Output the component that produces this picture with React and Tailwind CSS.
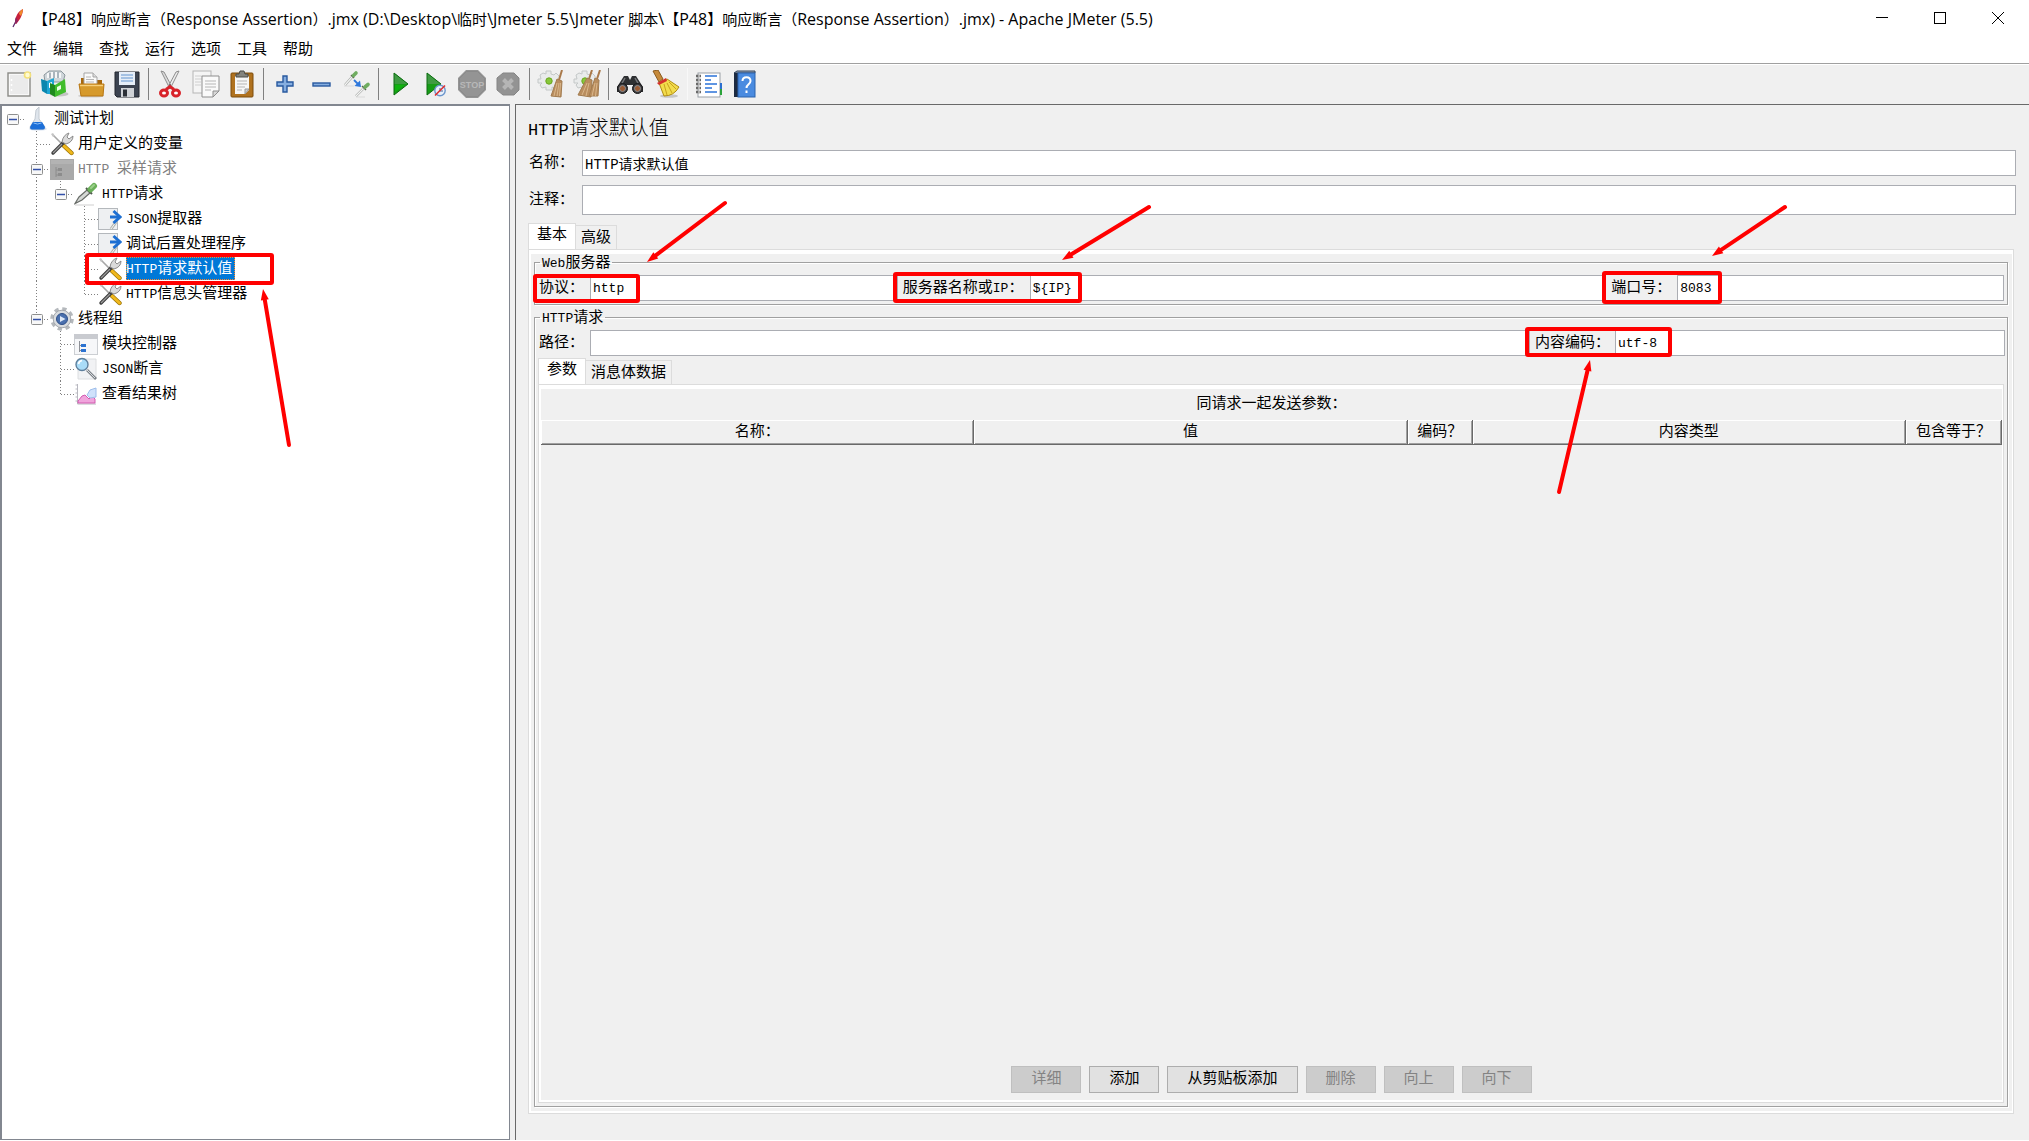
import React from "react";
import clsx from "clsx";

/* ---------- text ---------- */

// Latin runs get their own size next to the CJK glyphs
const Mixed = ({ text, latin = "text-[13px]" }) =>
  text.split(/([\x20-\x7e]+)/).map((part, i) =>
    i % 2 ? (
      <span key={i} className={clsx("font-normal whitespace-pre", latin)}>
        {part}
      </span>
    ) : (
      part
    )
  );

/* ---------- toolbar icons (28 x 28) ---------- */

const Svg = ({ size = 28, children }) => (
  <svg
    width={size}
    height={size}
    viewBox={`0 0 ${size} ${size}`}
    fill="none"
    className="shrink-0"
    aria-hidden="true"
  >
    {children}
  </svg>
);

const Feather = () => (
  <svg width="14" height="20" viewBox="0 0 14 20" fill="none" aria-hidden="true">
    <path d="M2 19 L5 13" stroke="#5b2a6b" strokeWidth="1.2" />
    <path d="M4 15 C4 9 7 3 12 1 C12 7 8 13 5 16 Z" fill="#c8203c" />
    <path d="M8 6 C8 4 10 2 12 1 C12 3 11 6 10 8 Z" fill="#f08a2c" />
    <path d="M4 15 C4 13 4 11 5 9 L7 13 L5 16 Z" fill="#8d2460" />
  </svg>
);

const NewIcon = () => (
  <Svg>
    <rect x="3" y="3" width="22" height="23" fill="#f8f8f8" stroke="#8a8a86" strokeWidth="1.4" />
    <rect x="5" y="5" width="18" height="19" fill="#ebebeb" />
    <path d="M6.5 9 V22" stroke="#fff" strokeWidth="1.5" strokeDasharray="2 3" />
    <circle cx="22.5" cy="5" r="3" fill="#fffbd0" stroke="#f3e07a" strokeWidth="1.6" />
  </Svg>
);

const TemplatesIcon = () => (
  <Svg>
    <ellipse cx="18" cy="24" rx="9.5" ry="2.5" fill="#c4c4c4" />
    <path d="M3 5 L8 1 L20 1 L24 5 L22 12 L4 12 Z" fill="#cfd6da" stroke="#8c979d" />
    <path d="M7 8 V3 M11 8 V2 M15 8 V2 M19 8 V3" stroke="#fff" strokeWidth="1.6" />
    <path d="M9 8 V3 M13 8 V2 M17 8 V2" stroke="#8794a0" />
    <path d="M0 9 L6 11 V24 L1 21 Z" fill="#0a86ae" />
    <path d="M6 11 L13 8 V24 L6 24 Z" fill="#1fa6d4" />
    <path d="M8 13 L11 12 V17 L8 18 Z" fill="#fff" />
    <path d="M9 13 L14 15 V27 L9 24 Z" fill="#1f8a1d" />
    <path d="M14 15 L24 9 L25 22 L14 27 Z" fill="#41bd2c" />
    <path d="M16 17 L20 15 V19 L16 21 Z" fill="#e9ffe2" />
  </Svg>
);

const OpenIcon = () => (
  <Svg>
    <ellipse cx="14" cy="26" rx="13" ry="1.6" fill="#cfcfcf" />
    <path d="M4 8 H9 L11 10 H25 V24 H4 Z" fill="#a8680d" />
    <path d="M7 3 H16 L20 7 V15 H7 Z" fill="#fafafa" stroke="#a5a5a5" />
    <path d="M16 3 V7 H20" fill="#ddd" stroke="#a5a5a5" />
    <path d="M9 7 H14 M9 9.5 H17 M9 12 H17" stroke="#b7b7b7" />
    <path d="M2 14 H27 L26 26 H4 Z" fill="#d69a2c" stroke="#b87713" />
    <path d="M3 15.5 H26" stroke="#f6d07c" strokeWidth="1.4" />
  </Svg>
);

const SaveIcon = () => (
  <Svg>
    <path d="M2 2 H26 V27 H4 L2 25 Z" fill="#3c4350" stroke="#23272f" />
    <rect x="6" y="2" width="16" height="13" fill="#e6eef8" />
    <path d="M8 5 H20 M8 8 H20 M8 11 H20" stroke="#8fb2dc" strokeWidth="1.4" />
    <rect x="8" y="18" width="13" height="9" fill="#cfd2d6" />
    <rect x="10" y="19.5" width="4" height="7" fill="#2b2f36" />
  </Svg>
);

const CutIcon = () => (
  <Svg>
    <path d="M5 1 L8 2 L16 17 L14 19 Z" fill="#dcdcdc" stroke="#8d8d8d" />
    <path d="M23 1 L20 2 L12 17 L14 19 Z" fill="#efefef" stroke="#8d8d8d" />
    <circle cx="14" cy="15" r="1.2" fill="#777" />
    <ellipse cx="8" cy="23" rx="3.5" ry="3" fill="#fff" stroke="#d8232a" strokeWidth="3" />
    <ellipse cx="20" cy="23" rx="3.5" ry="3" fill="#fff" stroke="#d8232a" strokeWidth="3" />
    <path d="M10 19.5 L14 16.5 L18 19.5" stroke="#d8232a" strokeWidth="3" />
  </Svg>
);

const CopyIcon = () => (
  <Svg>
    <rect x="1" y="1" width="18" height="22" fill="#f5f5f5" stroke="#b5b5b5" />
    <path d="M3 6 H10 M3 9 H10 M3 12 H9 M3 15 H9" stroke="#cfcfcf" />
    <path d="M10 6 H27 V21 L21 27 H10 Z" fill="#fafafa" stroke="#8e8e8e" />
    <path d="M13 11 H24 M13 14 H24 M13 17 H24 M13 20 H19" stroke="#b5b5b5" strokeWidth="1.2" />
    <path d="M27 21 H21 V27 Z" fill="#d8d8d8" stroke="#8e8e8e" />
  </Svg>
);

const PasteIcon = () => (
  <Svg>
    <rect x="3" y="3" width="22" height="24" rx="1" fill="#b0721f" stroke="#7d4c0c" />
    <path d="M7 6 H21 V20 L17 24 H7 Z" fill="#f6f6f6" />
    <path d="M9 11 H19 M9 14 H19 M9 17 H17 M9 20 H14" stroke="#b5b5b5" />
    <path d="M21 19 H17 V24 Z" fill="#cfcfcf" stroke="#999" />
    <path d="M8 7 V4 H11 L12 1 H16 L17 4 H20 V7 Z" fill="#83837d" stroke="#4d4d49" />
  </Svg>
);

const PlusIcon = () => (
  <Svg>
    <path d="M12 6 H16 V12 H22 V16 H16 V22 H12 V16 H6 V12 H12 Z" fill="#86aee0" stroke="#28599f" strokeWidth="1.4" />
  </Svg>
);

const MinusIcon = () => (
  <Svg>
    <rect x="6" y="13" width="17" height="3" fill="#86aee0" stroke="#28599f" strokeWidth="1.4" />
  </Svg>
);

const ToggleIcon = () => (
  <Svg>
    <path d="M1 16 H11 M13 27 H22" stroke="#dadada" />
    <path d="M2 15 L9 7" stroke="#9da19d" strokeWidth="2.4" />
    <path d="M2 15 L9 7" stroke="#f4f4f4" strokeWidth="1.2" />
    <path d="M8 5 L11 8" stroke="#55604f" strokeWidth="1.4" />
    <path d="M10.5 5.5 L13 3" stroke="#6fac60" strokeWidth="3.6" strokeLinecap="round" />
    <path d="M13 26 L20 19" stroke="#9da19d" strokeWidth="2.4" />
    <path d="M13 26 L20 19" stroke="#f4f4f4" strokeWidth="1.2" />
    <path d="M19 16 L23 20" stroke="#55604f" strokeWidth="1.4" />
    <path d="M22 17 L25 14.5" stroke="#6fac60" strokeWidth="3.6" strokeLinecap="round" />
    <path d="M11 10 L15 14" stroke="#2f78dc" strokeWidth="1.8" />
    <path d="M18 17 L11.5 16 L17 10.5 Z" fill="#2f78dc" />
  </Svg>
);

const StartIcon = () => (
  <Svg>
    <path d="M8 3 L22 14 L8 25 Z" fill="#179c17" />
    <path d="M8 3 L22 14 H8 Z" fill="#3f9b43" />
    <path d="M9 22 V15 H19 Z" fill="#0eb40e" />
    <path d="M8 3 L22 14 L8 25 Z" stroke="#0c6d10" />
  </Svg>
);

const StartNoPauseIcon = () => (
  <Svg>
    <path d="M5 3 L19 14 L5 25 Z" fill="#179c17" />
    <path d="M5 3 L19 14 H5 Z" fill="#3f9b43" />
    <path d="M5 3 L19 14 L5 25 Z" stroke="#0c6d10" />
    <circle cx="18" cy="20.5" r="5.2" fill="#e8f0fa" stroke="#6c96cc" strokeWidth="1.4" />
    <path d="M18 18 V21 H21" stroke="#47679a" />
    <path d="M13 25.5 L23 15.5" stroke="#e03030" strokeWidth="1.6" />
  </Svg>
);

const StopIcon = () => (
  <Svg>
    <path d="M8 0 H20 L28 8 V20 L20 28 H8 L0 20 V8 Z" fill="#949494" />
    <path d="M8.5 1.5 H19.5 L26.5 8.5 V19.5 L19.5 26.5 H8.5 L1.5 19.5 V8.5 Z" stroke="#8a8a8a" />
    <text x="14" y="18" textAnchor="middle" fontSize="9" fontWeight="bold" fontFamily="Liberation Sans, sans-serif" fill="#b8b8b8">
      STOP
    </text>
  </Svg>
);

const ShutdownIcon = () => (
  <Svg>
    <path d="M9 3 H20 L25 8 V20 L20 25 H9 L3 20 V8 Z" fill="#939393" stroke="#858585" />
    <path d="M9.5 9.5 L18.5 18.5 M18.5 9.5 L9.5 18.5" stroke="#b5b5b5" strokeWidth="4" />
  </Svg>
);

const GearShape = () => (
  <>
    <path
      d="M9 1 H14 V4 L17 5 L19 3 L22 6 V16 L18 18 L15 17 V20 H9 V17 L5 18 L3 15 L5 13 H1 V9 H4 L3 5 L6 3 L9 4 Z"
      fill="#e9ebeb"
      stroke="#c4c8c8"
    />
    <circle cx="12" cy="11" r="3.2" fill="#86c83a" stroke="#6ba51f" />
  </>
);

const ClearIcon = () => (
  <Svg>
    <GearShape />
    <path d="M25 0 L22 10" stroke="#a9794a" strokeWidth="2" />
    <path d="M20 9 L25 11 L24 27 L14 26 Z" fill="#b98d5e" stroke="#a27c50" />
    <path d="M20 13 L17 26 M22 13 L20 26 M23.5 13 L22.5 26" stroke="#dab78b" />
  </Svg>
);

const ClearAllIcon = () => (
  <Svg>
    <GearShape />
    <path d="M19 0 L16 9 M27 0 L24 9" stroke="#a9794a" strokeWidth="2" />
    <path d="M14 8 L19 10 L18 27 L5 25 Z" fill="#b98d5e" stroke="#a27c50" />
    <path d="M22 8 L26 10 L25 26 L16 26 Z" fill="#b98d5e" stroke="#a27c50" />
    <path d="M14 13 L9 25 M16 13 L13 26 M22 13 L19 26 M24 13 L22.5 26" stroke="#dab78b" />
  </Svg>
);

const SearchIcon = () => (
  <Svg>
    <path d="M8 6 H12 L14 10 L16 6 H20 L27 17 V22 H17 V15 H11 V22 H1 V17 Z" fill="#2f3032" />
    <path d="M9 8 L5 15 M19 8 L23 15" stroke="#77797c" strokeWidth="1.5" />
    <circle cx="6.5" cy="18.5" r="5" fill="#3a3a3c" stroke="#18181a" />
    <circle cx="21.5" cy="18.5" r="5" fill="#3a3a3c" stroke="#18181a" />
    <circle cx="6.5" cy="18.5" r="3" fill="#9a5a32" stroke="#8b8c90" />
    <circle cx="21.5" cy="18.5" r="3" fill="#9a5a32" stroke="#8b8c90" />
  </Svg>
);

const BroomIcon = () => (
  <Svg>
    <ellipse cx="17" cy="26" rx="9" ry="1.8" fill="#c6c6c6" />
    <path d="M1 1 L6 0 L11 9 L7 12 Z" fill="#c68a3a" stroke="#8b5a1e" />
    <path d="M7 13 L15 9 L27 17 Q22 26 12 26 Z" fill="#f2dc4c" stroke="#b08c10" />
    <path d="M12 14 L15 25 M15 13 L20 23 M17 12 L24 19" stroke="#c7a21c" />
    <path d="M5 13 L14 8 L15 11 L7 15 Z" fill="#d3312b" />
  </Svg>
);

const FunctionIcon = () => (
  <Svg>
    <rect x="3" y="3" width="22" height="24" fill="#fff" stroke="#9aa0a6" />
    <rect x="25" y="13" width="2" height="6" fill="#2b6fd0" />
    <rect x="25" y="19" width="2" height="6" fill="#2aa33a" />
    <path d="M10 6 H22 M10 10 H16 M10 14 H22 M10 18 H17 M10 22 H22" stroke="#2b73d9" strokeWidth="1.6" />
    <path d="M1 6 H6 M1 10 H6 M1 14 H6 M1 18 H6 M1 22 H6" stroke="#6a6a6a" strokeWidth="2.4" />
    <path d="M3 6 H5 M3 10 H5 M3 14 H5 M3 18 H5 M3 22 H5" stroke="#eee" />
  </Svg>
);

const HelpIcon = () => (
  <Svg>
    <path d="M3 3 L6 1 H24 V3 Z" fill="#9aa4b2" stroke="#33455f" />
    <rect x="3" y="3" width="5" height="24" fill="#1d2b42" />
    <rect x="7" y="3" width="17" height="24" fill="#4a8be0" stroke="#2a63ad" />
    <path d="M11.5 11 C11.5 6 19.5 6 19.5 11 C19.5 14.5 15.5 14 15.5 18" stroke="#fff" strokeWidth="2" />
    <rect x="14.5" y="20.5" width="2" height="2.5" fill="#fff" />
  </Svg>
);

/* ---------- tree icons (24 x 24) ---------- */

const FlaskIcon = () => (
  <Svg size={24}>
    <ellipse cx="12" cy="22" rx="9" ry="1.6" fill="#d8e2f0" />
    <path d="M10 3 L13 0 V12 L19 20 Q19 22.5 17 22.5 H6 Q4 22.5 4 20 L9 12 Z" fill="#dfe5ec" stroke="#c3cad2" />
    <path d="M7 15 H16 L19 20 Q19 22.5 17 22.5 H6 Q4 22.5 4 20 Z" fill="#1c6fd8" />
    <path d="M7.5 16 Q11.5 18 15.5 16" stroke="#8fc0f5" />
  </Svg>
);

const ToolsIcon = () => (
  <Svg size={24}>
    <path d="M3 3 L13 13" stroke="#a6a6a6" strokeWidth="1.6" />
    <path d="M1 2 L3 1 L5 4 L3 5 Z" fill="#c4c4c4" />
    <path d="M14 14 L21.5 21" stroke="#9a7408" strokeWidth="4.4" strokeLinecap="round" />
    <path d="M14 14 L21.5 21" stroke="#f0b81c" strokeWidth="3" strokeLinecap="round" />
    <path d="M3 21 L14 10" stroke="#3e3e3e" strokeWidth="3.4" strokeLinecap="round" />
    <path d="M3 21 L12 12" stroke="#9b9b9b" strokeWidth="1.2" />
    <path d="M12 10 Q13 3 19 1 L17 5 L19 7 L23 4 Q23 10 16 12 Z" fill="#dadada" stroke="#8a8a8a" />
  </Svg>
);

const DisabledControllerIcon = () => (
  <Svg size={24}>
    <rect x="0" y="2" width="24" height="21" fill="#a9a9a9" />
    <rect x="1" y="3" width="22" height="4" fill="#b3b3b3" />
    <path d="M6 10 V20 M6 13 H9 M6 18 H9" stroke="#8c8c8c" />
    <rect x="8" y="11" width="4" height="3" fill="#8c8c8c" />
    <rect x="8" y="16" width="4" height="3" fill="#8c8c8c" />
  </Svg>
);

const SamplerIcon = () => (
  <Svg size={24}>
    <path d="M1 23 H20" stroke="#cfcfcf" />
    <path d="M1 21.5 L5 15 L13 8 L16 11 L8 18 Z" fill="#d5d8d5" stroke="#686c68" strokeWidth="1.2" />
    <path d="M12 6 L18 12" stroke="#4f5a4c" strokeWidth="2" />
    <path d="M16.5 7.5 L20 4" stroke="#6bb05a" strokeWidth="6" strokeLinecap="round" />
    <path d="M17 6 L20 3" stroke="#9ad089" strokeWidth="2" strokeLinecap="round" />
  </Svg>
);

const PostProcessorIcon = () => (
  <Svg size={24}>
    <rect x="0.5" y="1.5" width="19" height="21" fill="#eef0f2" stroke="#b4b8bc" />
    <path d="M18 15 L13 22" stroke="#b0b4b0" strokeWidth="3" />
    <path d="M18 15 L13 22" stroke="#f4f4f4" />
    <path d="M12 10 H21" stroke="#1d6fd2" strokeWidth="3" />
    <path d="M15.5 4 L22 10 L15.5 16" stroke="#1d6fd2" strokeWidth="3" />
  </Svg>
);

const ThreadGroupIcon = () => (
  <Svg size={24}>
    <circle cx="12" cy="12" r="10" stroke="#b4b8bc" strokeWidth="3.6" strokeDasharray="4.2 3.65" />
    <circle cx="12" cy="12" r="8.8" fill="#d9dcdf" stroke="#a4a8ad" />
    <circle cx="12" cy="12" r="5.5" fill="#4a70ae" stroke="#2e4f88" />
    <path d="M10 9 L15.5 12 L10 15 Z" fill="#dfe9f7" />
  </Svg>
);

const ControllerIcon = () => (
  <Svg size={24}>
    <rect x="0.5" y="2.5" width="23" height="20" fill="#f6f7f9" stroke="#cccfd3" />
    <rect x="0" y="2" width="24" height="5" fill="#c9cbd0" />
    <path d="M5.5 9 V20 M5.5 13.5 H8 M5.5 18.5 H8" stroke="#8d9096" />
    <rect x="7" y="12" width="5" height="3" fill="#2c72d0" />
    <rect x="7" y="17" width="5" height="3" fill="#2c72d0" />
  </Svg>
);

const AssertionIcon = () => (
  <Svg size={24}>
    <path d="M4 2 H22 V22 H4 Z" fill="#f1f2f4" stroke="#dcdee0" />
    <path d="M13 13 L22 22" stroke="#7c8288" strokeWidth="2.6" />
    <path d="M13 13 L21 21" stroke="#d9dcdf" />
    <circle cx="8" cy="7.5" r="6" fill="#a9dcf8" stroke="#5e7f9c" strokeWidth="1.4" />
    <path d="M4.5 7 Q5 4 8 3.5" stroke="#fff" strokeWidth="1.6" />
  </Svg>
);

const ListenerIcon = () => (
  <Svg size={24}>
    <path d="M3.5 2 V22 H22" stroke="#b8b8c0" />
    <path d="M1.5 3 H3 M1.5 7 H3 M1.5 11 H3 M1.5 15 H3 M1.5 19 H3" stroke="#b8b8c0" />
    <path d="M4 19 L8 14 L11 13 L15 17 L18 14 L21 17 V21 H4 Z" fill="#f0a4dc" stroke="#d25ab0" />
    <path d="M13 13 L16 8 L22 6 V15 L16 16 Z" fill="#cfe2fb" stroke="#9dbdea" />
  </Svg>
);

/* ---------- window chrome ---------- */

const MENUS = ["文件", "编辑", "查找", "运行", "选项", "工具", "帮助"];

const TITLE =
  "【P48】响应断言（Response Assertion）.jmx (D:\\Desktop\\临时\\Jmeter 5.5\\Jmeter 脚本\\【P48】响应断言（Response Assertion）.jmx) - Apache JMeter (5.5)";

// a string stands for a separator and holds its colour
const TOOLS = [
  ["新建", NewIcon],
  ["模板", TemplatesIcon],
  ["打开", OpenIcon],
  ["保存", SaveIcon],
  "bg-[#808080]",
  ["剪切", CutIcon],
  ["复制", CopyIcon],
  ["粘贴", PasteIcon],
  "bg-[#808080]",
  ["展开", PlusIcon],
  ["折叠", MinusIcon],
  ["切换", ToggleIcon],
  "bg-[#808080]",
  ["启动", StartIcon],
  ["不停顿开始", StartNoPauseIcon],
  ["停止", StopIcon],
  ["关闭", ShutdownIcon],
  "bg-[#808080]",
  ["清除", ClearIcon],
  ["清除全部", ClearAllIcon],
  "bg-[#808080]",
  ["搜索", SearchIcon],
  ["重置搜索", BroomIcon],
  "bg-[#f8f8f8]",
  ["函数助手", FunctionIcon],
  ["帮助", HelpIcon],
];

const TitleBar = () => (
  <header className="flex h-9 items-center bg-white pr-[2px] pl-[11px]">
    <Feather />
    <h1 className="min-w-0 flex-1 overflow-hidden pt-px pl-2 font-['Open_Sans','Noto_Sans_CJK_SC',sans-serif] text-[15px] whitespace-nowrap">
      <Mixed text={TITLE} latin="text-[16px]" />
    </h1>
    <button type="button" aria-label="最小化" className="flex h-9 w-[58px] items-center justify-center">
      <svg width="12" height="12" stroke="#000" fill="none">
        <path d="M0 5.5 H12" />
      </svg>
    </button>
    <button type="button" aria-label="最大化" className="flex h-9 w-[58px] items-center justify-center">
      <svg width="12" height="12" stroke="#000" fill="none">
        <rect x="0.5" y="0.5" width="11" height="11" />
      </svg>
    </button>
    <button type="button" aria-label="关闭窗口" className="flex h-9 w-[58px] items-center justify-center">
      <svg width="12" height="12" stroke="#000" fill="none">
        <path d="M0 0 L12 12 M12 0 L0 12" />
      </svg>
    </button>
  </header>
);

const MenuBar = () => (
  <nav className="flex h-[27px] items-center gap-4 bg-white pt-1 pl-[7px] text-[15px]">
    {MENUS.map((m) => (
      <button key={m} type="button">
        {m}
      </button>
    ))}
  </nav>
);

const Toolbar = () => (
  <div
    role="toolbar"
    className="flex h-[41px] items-center border-t border-[#a0a0a0] bg-[#f0f0f0] pl-px shadow-[inset_0_1px_0_#fff]"
  >
    {TOOLS.map((tool, i) => {
      if (typeof tool === "string") {
        return (
          <span key={i} className="flex w-[7px] justify-center">
            <span className={clsx("h-8 w-px", tool)} />
          </span>
        );
      }
      const [label, Icon] = tool;
      return (
        <button key={i} type="button" aria-label={label} className="flex w-9 justify-center">
          <Icon />
        </button>
      );
    })}
  </div>
);

/* ---------- test plan tree ---------- */

// guides: one letter per indent column
//   . empty   v line through   t branch   e last branch
//   r root handle   h handle, line through   l last handle
const NODES = [
  { guides: "r", icon: FlaskIcon, text: "测试计划" },
  { guides: ".t", icon: ToolsIcon, text: "用户定义的变量" },
  { guides: ".h", icon: DisabledControllerIcon, text: "HTTP 采样请求", disabled: true },
  { guides: ".vl", icon: SamplerIcon, text: "HTTP请求" },
  { guides: ".v.t", icon: PostProcessorIcon, text: "JSON提取器" },
  { guides: ".v.t", icon: PostProcessorIcon, text: "调试后置处理程序" },
  { guides: ".v.t", icon: ToolsIcon, text: "HTTP请求默认值", selected: true },
  { guides: ".v.e", icon: ToolsIcon, text: "HTTP信息头管理器" },
  { guides: ".l", icon: ThreadGroupIcon, text: "线程组" },
  { guides: "..t", icon: ControllerIcon, text: "模块控制器" },
  { guides: "..t", icon: AssertionIcon, text: "JSON断言" },
  { guides: "..e", icon: ListenerIcon, text: "查看结果树" },
];

const Guide = ({ kind }) => (
  <svg width="24" height="25" fill="none" className="shrink-0" aria-hidden="true">
    <g stroke="#808080" strokeDasharray="1 2">
      {"vth".includes(kind) && <path d="M10.5 0 V25" />}
      {"el".includes(kind) && <path d="M10.5 0 V13" />}
      {"te".includes(kind) && <path d="M11 13.5 H24" />}
      {"rhl".includes(kind) && <path d="M18 13.5 H24" />}
    </g>
    {"rhl".includes(kind) && (
      <>
        <rect x="5.5" y="8.5" width="11" height="10" rx="1" fill="#f8f8f8" stroke="#8e8f8f" />
        <path d="M7 13.5 H15" stroke="#3350a8" strokeWidth="1.5" />
      </>
    )}
  </svg>
);

const Tree = () => (
  <ul role="tree" className="w-[510px] shrink-0 border-2 border-r border-b border-[#828790] bg-white text-[15px]">
    {NODES.map(({ guides, icon: Icon, text, disabled, selected }) => (
      <li key={text} role="treeitem" aria-selected={!!selected} className="flex h-[25px] items-center">
        {guides.split("").map((kind, i) => (
          <Guide key={i} kind={kind} />
        ))}
        <Icon />
        <span
          className={clsx(
            "ml-1 h-[23px] pr-[3px] leading-[26px] whitespace-nowrap",
            disabled && "text-[#808080]",
            selected && "bg-[#0078d7] text-white outline-1 -outline-offset-1 outline-[#ff8728] outline-dotted"
          )}
        >
          <Mixed text={text} />
        </span>
      </li>
    ))}
  </ul>
);

/* ---------- editor form ---------- */

const Field = ({ id, label, value = "", labelClass, boxClass, inputClass = "h-[26px] text-[13px]" }) => (
  <div className={clsx("flex items-center", boxClass)}>
    <label htmlFor={id} className={clsx("shrink-0 pt-[3px] whitespace-nowrap", labelClass)}>
      <Mixed text={label} />
    </label>
    <input
      id={id}
      type="text"
      defaultValue={value}
      className={clsx("min-w-0 flex-1 border border-[#abadb3] bg-white px-[2px]", inputClass)}
    />
  </div>
);

const Tabs = ({ tabs, className }) => (
  <div role="tablist" className={clsx("flex items-end", className)}>
    {tabs.map((t, i) => (
      <button
        key={t}
        type="button"
        role="tab"
        aria-selected={i === 0}
        className={clsx(
          "border border-b-0 border-[#dcdcdc]",
          i === 0 ? "h-[26px] bg-white px-2 pb-px" : "h-6 border-l-0 bg-[#f0f0f0] px-[5px] pt-[2px]"
        )}
      >
        {t}
      </button>
    ))}
  </div>
);

const TabPanel = ({ className, children }) => (
  <div
    role="tabpanel"
    className={clsx("flex flex-1 flex-col border border-[#dcdcdc] bg-white pt-1 pr-px pb-[2px] pl-[2px]", className)}
  >
    <div className="flex flex-1 flex-col bg-[#f0f0f0]">{children}</div>
  </div>
);

const Group = ({ title, className, children }) => (
  <fieldset
    className={clsx(
      "min-w-0 border border-[#a0a0a0] px-[3px] pt-[5px] pb-[3px] shadow-[1px_1px_0_#fff,inset_1px_1px_0_#fff]",
      className
    )}
  >
    <legend className="ml-[2px] h-4 px-[2px] leading-[19px]">
      <Mixed text={title} />
    </legend>
    {children}
  </fieldset>
);

const COLUMNS = [
  ["名称：", ""],
  ["值", ""],
  ["编码？", "w-[65px]"],
  ["内容类型", ""],
  ["包含等于？", "w-24"],
];

const ArgumentsTable = () => (
  <table className="w-full table-fixed border-separate border-spacing-0">
    <thead>
      <tr>
        {COLUMNS.map(([name, width]) => (
          <th
            key={name}
            scope="col"
            className={clsx(
              "h-[25px] border-r border-b border-[#696969] p-0 pt-[2px] leading-[22px] font-normal shadow-[inset_1px_1px_0_#fff,inset_-1px_-1px_0_#a0a0a0]",
              width
            )}
          >
            {name}
          </th>
        ))}
      </tr>
    </thead>
  </table>
);

const BUTTONS = [
  ["详细", true],
  ["添加", false],
  ["从剪贴板添加", false],
  ["删除", true],
  ["向上", true],
  ["向下", true],
];

const Editor = () => (
  <main className="flex min-w-0 flex-1 flex-col border-t border-l border-[#696969] bg-[#f0f0f0] pr-[15px] pb-[26px] pl-3 text-[15px]">
    <h2 className="mt-2 h-[30px] text-[20px] leading-[34px] font-light">
      <Mixed text="HTTP请求默认值" latin="text-[17px]" />
    </h2>
    <Field
      id="name"
      label="名称："
      value="HTTP请求默认值"
      boxClass="mt-[7px] -mr-[2px]"
      labelClass="w-[54px] pl-px"
      inputClass="h-[26px] text-[14px]"
    />
    <Field
      id="comment"
      label="注释："
      boxClass="mt-[9px] -mr-[2px]"
      labelClass="w-[54px] pl-px"
      inputClass="h-[30px] text-[14px]"
    />

    <Tabs tabs={["基本", "高级"]} className="mt-2" />
    <TabPanel>
      <Group title="Web服务器" className="mr-1 ml-[3px]">
        <div className="flex gap-[5px]">
          <Field id="protocol" label="协议：" value="http" boxClass="grow-[360] basis-0" labelClass="w-[52px] pl-px" />
          <Field id="server" label="服务器名称或IP：" value="${IP}" boxClass="grow-[704] basis-0" labelClass="w-[127px]" />
          <Field id="port" label="端口号：" value="8083" boxClass="grow-[393] basis-0" labelClass="w-[66px]" />
        </div>
      </Group>

      <Group title="HTTP请求" className="mt-1 mr-1 mb-1 ml-[3px] flex flex-1 flex-col">
        <div className="-mr-px flex gap-[5px]">
          <Field id="path" label="路径：" boxClass="grow-[992] basis-0" labelClass="w-[52px] pl-px" />
          <Field id="encoding" label="内容编码：" value="utf-8" boxClass="grow-[470] basis-0" labelClass="w-20" />
        </div>
        <Tabs tabs={["参数", "消息体数据"]} className="mt-[2px]" />
        <TabPanel>
          <p className="h-[31px] text-center leading-[32px]">同请求一起发送参数：</p>
          <ArgumentsTable />
          <div className="mt-auto mb-[7px] flex justify-center gap-2">
            {BUTTONS.map(([label, disabled]) => (
              <button
                key={label}
                type="button"
                disabled={disabled}
                className="h-[27px] border border-[#adadad] bg-[#e1e1e1] px-[19px] leading-6 disabled:border-[#bfbfbf] disabled:bg-[#cccccc] disabled:text-[#838383]"
              >
                {label}
              </button>
            ))}
          </div>
        </TabPanel>
      </Group>
    </TabPanel>
  </main>
);

/* ---------- red pen marks over the window ---------- */

const BOXES = [
  [87, 255, 185, 28],
  [535, 276, 103, 25],
  [895, 274, 185, 27],
  [1604, 273, 116, 29],
  [1527, 329, 143, 26],
];

const ARROWS = [
  [725, 203, 647, 262],
  [1149, 207, 1062, 260],
  [1785, 207, 1712, 256],
  [1559, 492, 1590, 360],
  [289, 445, 263, 289],
];

const Marks = () => (
  <svg className="pointer-events-none absolute inset-0 h-full w-full" fill="none" aria-hidden="true">
    {BOXES.map(([x, y, w, h]) => (
      <rect key={x} x={x} y={y} width={w} height={h} rx="1" stroke="#ff0000" strokeWidth="4" />
    ))}
    {ARROWS.map(([x1, y1, x2, y2]) => {
      // the shaft stops short of the tip so the head stays sharp
      const len = Math.hypot(x2 - x1, y2 - y1);
      const dx = (x2 - x1) / len;
      const dy = (y2 - y1) / len;
      const bx = x2 - dx * 11;
      const by = y2 - dy * 11;
      return (
        <g key={x1}>
          <path d={`M${x1} ${y1} L${bx} ${by}`} stroke="#ff0000" strokeWidth="4" strokeLinecap="round" />
          <path d={`M${bx - dy * 4} ${by + dx * 4} L${x2} ${y2} L${bx + dy * 4} ${by - dx * 4} Z`} fill="#ff0000" />
        </g>
      );
    })}
  </svg>
);

export default function App() {
  return (
    <div className="relative flex min-h-screen flex-col bg-white pb-px font-['Liberation_Mono','Noto_Sans_CJK_SC',monospace] text-black">
      <TitleBar />
      <MenuBar />
      <Toolbar />
      <div className="flex flex-1 gap-[5px] bg-[#f0f0f0]">
        <Tree />
        <Editor />
      </div>
      <Marks />
    </div>
  );
}
